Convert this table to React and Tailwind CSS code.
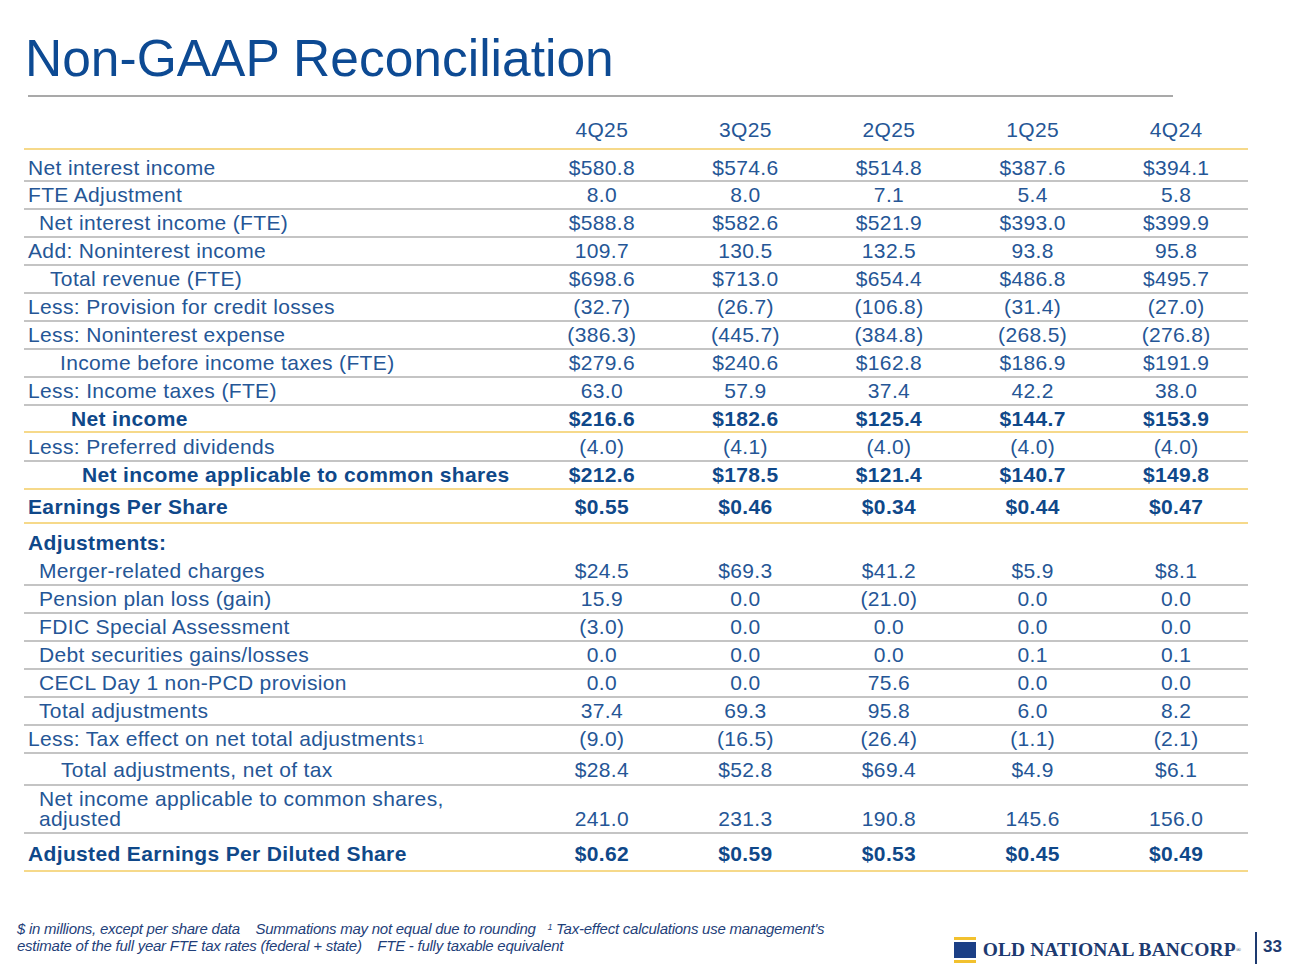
import React from "react";

const rows = [
  { label: "Net interest income", pl: "pl-[4px]", v: ["$580.8", "$574.6", "$514.8", "$387.6", "$394.1"], h: "h-[30px] pt-[5px]", line: "gray" },
  { label: "FTE Adjustment", pl: "pl-[4px]", v: ["8.0", "8.0", "7.1", "5.4", "5.8"], h: "h-[26px]", line: "gray" },
  { label: "Net interest income (FTE)", pl: "pl-[15px]", v: ["$588.8", "$582.6", "$521.9", "$393.0", "$399.9"], h: "h-[26px]", line: "gray" },
  { label: "Add: Noninterest income", pl: "pl-[4px]", v: ["109.7", "130.5", "132.5", "93.8", "95.8"], h: "h-[26px]", line: "gray" },
  { label: "Total revenue (FTE)", pl: "pl-[26px]", v: ["$698.6", "$713.0", "$654.4", "$486.8", "$495.7"], h: "h-[26px]", line: "gray" },
  { label: "Less: Provision for credit losses", pl: "pl-[4px]", v: ["(32.7)", "(26.7)", "(106.8)", "(31.4)", "(27.0)"], h: "h-[26px]", line: "gray" },
  { label: "Less: Noninterest expense", pl: "pl-[4px]", v: ["(386.3)", "(445.7)", "(384.8)", "(268.5)", "(276.8)"], h: "h-[26px]", line: "gray" },
  { label: "Income before income taxes (FTE)", pl: "pl-[36px]", v: ["$279.6", "$240.6", "$162.8", "$186.9", "$191.9"], h: "h-[26px]", line: "gray" },
  { label: "Less: Income taxes (FTE)", pl: "pl-[4px]", v: ["63.0", "57.9", "37.4", "42.2", "38.0"], h: "h-[26px]", line: "gray" },
  { label: "Net income", pl: "pl-[47px]", bold: true, v: ["$216.6", "$182.6", "$125.4", "$144.7", "$153.9"], h: "h-[25px]", line: "gold" },
  { label: "Less: Preferred dividends", pl: "pl-[4px]", v: ["(4.0)", "(4.1)", "(4.0)", "(4.0)", "(4.0)"], h: "h-[27px]", line: "gray" },
  { label: "Net income applicable to common shares", pl: "pl-[58px]", bold: true, v: ["$212.6", "$178.5", "$121.4", "$140.7", "$149.8"], h: "h-[26px]", line: "gold" },
  { label: "Earnings Per Share", pl: "pl-[4px]", bold: true, v: ["$0.55", "$0.46", "$0.34", "$0.44", "$0.47"], h: "h-[32px] pt-[2px]", line: "gold" },
  { label: "Adjustments:", pl: "pl-[4px]", bold: true, v: ["", "", "", "", ""], h: "h-[34px] pt-[4px]", line: "none" },
  { label: "Merger-related charges", pl: "pl-[15px]", v: ["$24.5", "$69.3", "$41.2", "$5.9", "$8.1"], h: "h-[26px]", line: "gray" },
  { label: "Pension plan loss (gain)", pl: "pl-[15px]", v: ["15.9", "0.0", "(21.0)", "0.0", "0.0"], h: "h-[26px]", line: "gray" },
  { label: "FDIC Special Assessment", pl: "pl-[15px]", v: ["(3.0)", "0.0", "0.0", "0.0", "0.0"], h: "h-[26px]", line: "gray" },
  { label: "Debt securities gains/losses", pl: "pl-[15px]", v: ["0.0", "0.0", "0.0", "0.1", "0.1"], h: "h-[26px]", line: "gray" },
  { label: "CECL Day 1 non-PCD provision", pl: "pl-[15px]", v: ["0.0", "0.0", "75.6", "0.0", "0.0"], h: "h-[26px]", line: "gray" },
  { label: "Total adjustments", pl: "pl-[15px]", v: ["37.4", "69.3", "95.8", "6.0", "8.2"], h: "h-[26px]", line: "gray" },
  { label: "Less: Tax effect on net total adjustments", sup: "1", pl: "pl-[4px]", v: ["(9.0)", "(16.5)", "(26.4)", "(1.1)", "(2.1)"], h: "h-[26px]", line: "gray" },
  { label: "Total adjustments, net of tax", pl: "pl-[37px]", v: ["$28.4", "$52.8", "$69.4", "$4.9", "$6.1"], h: "h-[30px] pt-[2px]", line: "gray" },
];

function Line({ type }) {
  if (type === "gold") return <div className="h-[2px] shrink-0 bg-[#f6d98a]" />;
  if (type === "gray") return <div className="h-[2px] shrink-0 bg-[#c4c4c4]" />;
  return null;
}

function Row({ r }) {
  const weight = r.bold ? "font-bold text-[#0f4889]" : "text-[#255696]";
  return (
    <div className="flex flex-col shrink-0">
      <div className={`grid grid-cols-[506px_repeat(5,1fr)] items-center shrink-0 ${r.h} ${weight}`}>
        <div className={`${r.pl} whitespace-nowrap`}>
          {r.label}
          {r.sup && <sup className="text-[12px] relative top-[-2px] ml-[1px]">{r.sup}</sup>}
        </div>
        {r.v.map((x, i) => (
          <div key={i} className="text-center">{x}</div>
        ))}
      </div>
      <Line type={r.line} />
    </div>
  );
}

export default function App() {
  const headers = ["4Q25", "3Q25", "2Q25", "1Q25", "4Q24"];
  return (
    <div className="w-[1300px] h-[975px] bg-white flex flex-col font-['Liberation_Sans',Arial,sans-serif] overflow-hidden">
      <div className="shrink-0 pt-[33px] pl-[25px] text-[51.5px] leading-[50px] text-[#0d4a93]">
        Non-GAAP Reconciliation
      </div>
      <div className="shrink-0 mt-[12px] ml-[28px] w-[1145px] h-[2px] bg-[#a9a9a9]" />

      <div className="shrink-0 ml-[24px] w-[1224px] mt-[15px] flex flex-col text-[21px] leading-[26px] tracking-[0.35px]">
        <div className="grid grid-cols-[506px_repeat(5,1fr)] items-center h-[36px] shrink-0 text-[#255696]">
          <div />
          {headers.map((h) => (
            <div key={h} className="text-center">{h}</div>
          ))}
        </div>
        <Line type="gold" />
        {rows.map((r, i) => (
          <Row key={i} r={r} />
        ))}
        <div className="grid grid-cols-[506px_repeat(5,1fr)] items-center h-[46px] shrink-0 text-[#255696]">
          <div className="pl-[15px] leading-[20px]">
            Net income applicable to common shares,
            <br />
            adjusted
          </div>
          {["241.0", "231.3", "190.8", "145.6", "156.0"].map((x, i) => (
            <div key={i} className="text-center leading-[20px] mt-[20px]">{x}</div>
          ))}
        </div>
        <Line type="gray" />
        <div className="grid grid-cols-[506px_repeat(5,1fr)] items-center h-[36px] shrink-0 pt-[4px] font-bold text-[#0f4889]">
          <div className="pl-[4px]">Adjusted Earnings Per Diluted Share</div>
          {["$0.62", "$0.59", "$0.53", "$0.45", "$0.49"].map((x, i) => (
            <div key={i} className="text-center">{x}</div>
          ))}
        </div>
        <Line type="gold" />
      </div>

      <div className="shrink-0 mt-[48px] flex items-start justify-between">
        <div className="pl-[17px] italic text-[15px] leading-[17px] text-[#1f3f7a] tracking-[-0.25px]">
          <div className="whitespace-nowrap">
            $ in millions, except per share data&nbsp;&nbsp;&nbsp; Summations may not equal due to rounding&nbsp;&nbsp;&nbsp;
            <sup className="text-[9px]">1</sup> Tax-effect calculations use management's
          </div>
          <div className="whitespace-nowrap">
            estimate of the full year FTE tax rates (federal + state)&nbsp;&nbsp;&nbsp; FTE - fully taxable equivalent
          </div>
        </div>
        <div className="flex items-center mt-[16px] pr-[18px]">
          <div className="flex flex-col w-[22px] mr-[7px]">
            <div className="h-[3px] bg-[#f2c12e]" />
            <div className="h-[16px] bg-[#1b3f86] mt-[2px]" />
            <div className="h-[3px] bg-[#f2c12e] mt-[2px]" />
          </div>
          <div className="font-['Liberation_Serif',serif] font-bold text-[19.5px] leading-[24px] text-[#1d3a70] tracking-[0.1px] whitespace-nowrap">
            OLD NATIONAL BANCORP<sup className="text-[7px] font-normal relative top-[-4px]">®</sup>
          </div>
          <div className="w-[2px] h-[32px] bg-[#1d3a70] ml-[14px] mr-[6px] -mt-[4px]" />
          <div className="text-[17px] font-bold text-[#1d3a70] -mt-[6px]">33</div>
        </div>
      </div>
    </div>
  );
}
